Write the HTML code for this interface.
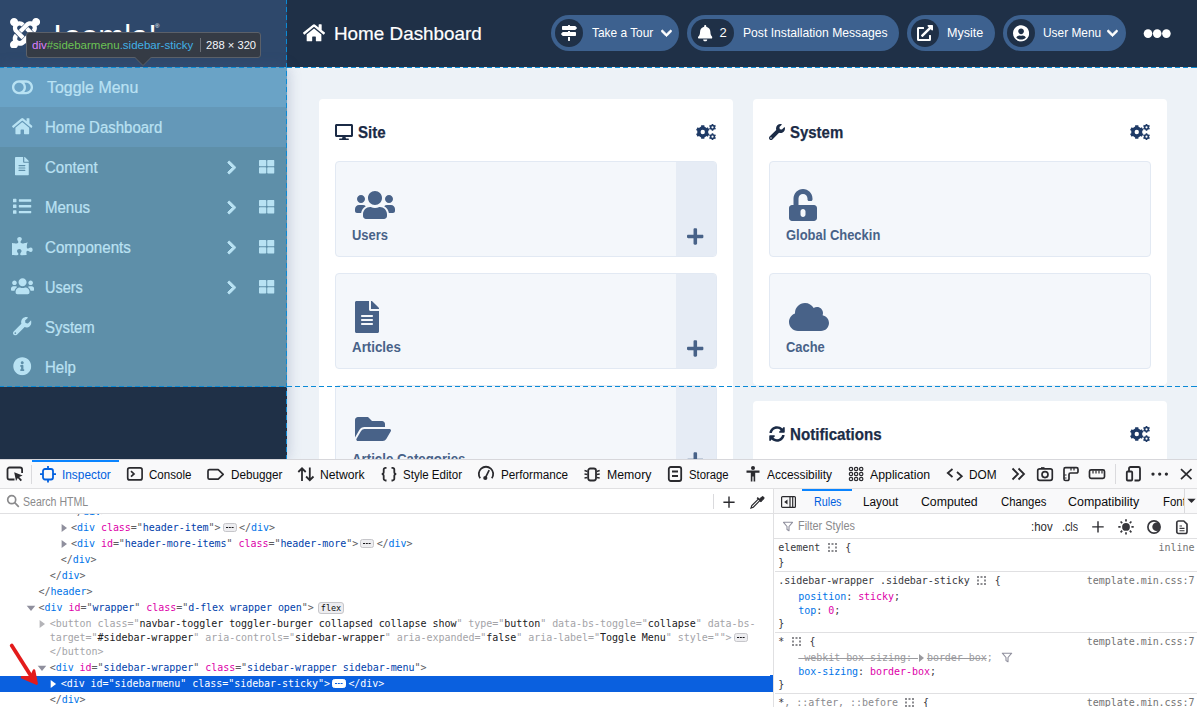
<!DOCTYPE html>
<html lang="en"><head><meta charset="utf-8"><title>Home Dashboard</title>
<style>
*{box-sizing:border-box;margin:0;padding:0}
html,body{width:1197px;height:707px;overflow:hidden;background:#fff}
body{position:relative;font-family:"Liberation Sans",sans-serif;font-size:16px;color:#212529}
.abs,.ic,.t{position:absolute}
.ic{display:block;fill:#fff;overflow:visible}
.t{white-space:nowrap;line-height:1;transform-origin:0 50%}
/* ---------- page ---------- */
#page{position:absolute;left:0;top:0;width:1197px;height:459px;overflow:hidden;background:#edf2f7}
#brand{position:absolute;left:0;top:0;width:287px;height:67px;background:#2e486b}
#hdr{position:absolute;left:287px;top:0;width:910px;height:67px;background:#1f3047}
#side{position:absolute;left:0;top:67px;width:287px;height:392px;background:#1f3047;box-shadow:0 0 13px rgba(70,90,140,.32)}
.row{position:absolute;left:0;width:287px;height:40px}
.row .t{color:#fff;font-size:15.600px;left:45px;top:13px;-webkit-text-stroke:.2px #fff}
.pill{position:absolute;top:15px;height:36px;border-radius:18px;background:#3d618f}
.pill .dot{position:absolute;top:4px;left:4px;width:28px;height:28px;border-radius:14px;background:#1f3047}
.pill .t{color:#fff;font-size:13px;top:11.3px}
.card{position:absolute;background:#fff;border-radius:4px}
.card h2{-webkit-text-stroke:.25px #1b2b46;position:absolute;transform-origin:0 50%;font-size:17px;font-weight:bold;color:#1b2b46;white-space:nowrap;line-height:1}
.qi{position:absolute;background:#f4f7fb;border:1px solid #e2e9f3;border-radius:4px;overflow:hidden}
.qi .add{position:absolute;right:0;top:0;bottom:0;width:40px;background:#e6ecf5}
.qi .t{font-size:14px;font-weight:bold;color:#486288}
/* highlighter */
#hl{position:absolute;left:0;top:67px;width:287px;height:320px;background:rgba(137,207,235,.6)}
.gh{position:absolute;left:0;width:1197px;height:1px;background:repeating-linear-gradient(90deg,#0a8ad6 0 5px,transparent 5px 8px) -1px 0}
.gv{position:absolute;top:0;width:1px;height:459px;background:repeating-linear-gradient(180deg,#0a8ad6 0 5px,transparent 5px 8px) 0 -1px}
#tip{position:absolute;left:26px;top:32px;width:235px;height:26px;background:#353b45;border:1px solid #5b6069;border-radius:3px;color:#f5f7fa;font-size:11px}
#tip .t{top:7px}
/* ---------- devtools ---------- */
#dt{position:absolute;left:0;top:0;width:1197px;height:707px;font-size:12px;color:#0c0c0d;overflow:hidden}
#dtbg{position:absolute;left:0;top:459px;width:1197px;height:248px;background:#fff}
#tb{position:absolute;left:0;top:459px;width:1197px;height:30px;background:#f9f9fa;border-top:1px solid #d7d7db;border-bottom:1px solid #e0e0e2}
.tl{font-size:12px;top:468.5px;color:#0c0c0d}
.sl{font-size:12px;top:495.500px;color:#0c0c0d}
.mono{font-family:"DejaVu Sans Mono","Liberation Mono",monospace;font-size:10px}
.ml{position:absolute;left:0;white-space:pre;line-height:14px;height:16px;padding-top:1px}
.ml, .rl{font-family:"DejaVu Sans Mono","Liberation Mono",monospace;font-size:10px;letter-spacing:-0.04px}
.tg{color:#0074e8}.an{color:#dd00a9}.av{color:#003eaa}.br{color:#5c5c5f}
.dim .tg,.dim .an,.dim .br{color:#a4a4a8}.dim .av{color:#202022}
.sel{background:#0a60df}
.sel *{color:#fff !important}
.badge{display:inline-block;border:1px solid #c6c6ca;border-radius:3px;font-size:8.500px;line-height:10.500px;margin-left:-2px;padding:0 2px;color:#0c0c0d;background:#ededf0;vertical-align:.5px;letter-spacing:0}
.el{display:inline-block;width:14px;height:9.500px;border:1px solid #c6c6ca;border-radius:2.500px;background:#ededf0;vertical-align:-1px;position:relative;margin:0 2.500px 0 2px}
.el::after{content:"";position:absolute;left:2.200px;top:3px;width:1.800px;height:1.800px;background:#1a1a1e;box-shadow:2.800px 0 #1a1a1e,5.600px 0 #1a1a1e}
.rl{position:absolute;white-space:pre;line-height:14px}
.pn{color:#0074e8}.pv{color:#dd00a9}.src{color:#737373}
.sepl{position:absolute;left:775px;width:422px;height:1px;background:#e0e0e2}

#mk{position:absolute;left:0;top:0;width:773px;height:707px;overflow:hidden}
#rv{position:absolute;left:0;top:0;width:1197px;height:707px;overflow:hidden;color:#38383d}
.sh{display:inline-block;width:9px;height:9px;vertical-align:-1px;margin:0 2.700px 0 1.500px;position:relative}
.sh::before{content:"";position:absolute;left:0;top:0;width:2px;height:2px;background:#8c8c90;box-shadow:3.500px 0 #8c8c90,7px 0 #8c8c90,0 3.500px #8c8c90,7px 3.500px #8c8c90,0 7px #8c8c90,3.500px 7px #8c8c90,7px 7px #8c8c90}
.ovr{color:#9a9a9e}
.ovr s{text-decoration-thickness:1px}
.tw{display:inline-block;width:0;height:0;border-left:5px solid #9a9a9e;border-top:4px solid transparent;border-bottom:4px solid transparent;margin:0 3px 0 1px;vertical-align:-1px}
.els{border-color:#fff !important;background:#fff !important}
.sel .els::after{background:#0a60df;box-shadow:2.800px 0 #0a60df,5.600px 0 #0a60df}

#ht{transform:scaleX(0.9925)}
#p1{transform:scaleX(0.9154)}
#p2{transform:scaleX(0.9344)}
#p3{transform:scaleX(0.9664)}
#p4{transform:scaleX(0.9154)}
#s0{transform:scaleX(0.9793)}
#s1{transform:scaleX(0.9606)}
#s2{transform:scaleX(0.9629)}
#s3{transform:scaleX(0.9634)}
#s4{transform:scaleX(0.9715)}
#s5{transform:scaleX(0.9280)}
#s6{transform:scaleX(0.9577)}
#s7{transform:scaleX(0.9602)}
#h1{transform:scaleX(0.8882)}
#h2{transform:scaleX(0.8796)}
#h3{transform:scaleX(0.8897)}
#q1{transform:scaleX(0.9249)}
#q2{transform:scaleX(0.9521)}
#q3{transform:scaleX(0.9472)}
#q4{transform:scaleX(0.9252)}
#q5{transform:scaleX(0.9231)}
#tp1{transform:scaleX(1.0462)}
#tp2{transform:scaleX(1.0173)}
#d1{transform:scaleX(0.9866)}
#d2{transform:scaleX(0.9652)}
#d3{transform:scaleX(0.9750)}
#d4{transform:scaleX(1.0155)}
#d5{transform:scaleX(0.9615)}
#d6{transform:scaleX(0.9767)}
#d7{transform:scaleX(1.0244)}
#d8{transform:scaleX(0.9422)}
#d9{transform:scaleX(0.9945)}
#d10{transform:scaleX(1.0252)}
#d11{transform:scaleX(0.9857)}
#d12{transform:scaleX(0.8807)}
#e1{transform:scaleX(0.8961)}
#e2{transform:scaleX(0.9797)}
#e3{transform:scaleX(1.0239)}
#e4{transform:scaleX(0.9449)}
#e5{transform:scaleX(1.0363)}
#e6{transform:scaleX(0.9495)}
#e7{transform:scaleX(0.9077)}
#e8{transform:scaleX(0.9521)}
#e9{transform:scaleX(0.8889)}
</style></head>
<body>
<svg width="0" height="0" style="position:absolute"><defs>
<symbol id="i-plus" viewBox="0 0 448 512"><path fill-rule="evenodd" d="M416 208H272V64c0-17.67-14.33-32-32-32h-32c-17.67 0-32 14.33-32 32v144H32c-17.67 0-32 14.33-32 32v32c0 17.67 14.33 32 32 32h144v144c0 17.67 14.33 32 32 32h32c17.67 0 32-14.33 32-32V304h144c17.67 0 32-14.33 32-32v-32c0-17.67-14.33-32-32-32z"/></symbol>
<symbol id="i-chev-r" viewBox="0 0 320 512"><path fill-rule="evenodd" stroke="#fff" stroke-width="34" stroke-linejoin="round" d="M285.476 272.971L91.132 467.314c-9.373 9.373-24.569 9.373-33.941 0l-22.667-22.667c-9.357-9.357-9.375-24.522-.04-33.901L188.505 256 34.484 101.255c-9.335-9.379-9.317-24.544.04-33.901l22.667-22.667c9.373-9.373 24.569-9.373 33.941 0L285.475 239.03c9.373 9.372 9.373 24.568.001 33.941z"/></symbol>
<symbol id="i-chev-d" viewBox="0 0 448 512"><path fill-rule="evenodd" stroke="#fff" stroke-width="34" stroke-linejoin="round" d="M207.029 381.476L12.686 187.132c-9.373-9.373-9.373-24.569 0-33.941l22.667-22.667c9.357-9.357 24.522-9.375 33.901-.04L224 284.505l154.745-154.021c9.379-9.335 24.544-9.317 33.901.04l22.667 22.667c9.373 9.373 9.373 24.569 0 33.941L240.971 381.476c-9.373 9.372-24.569 9.372-33.942 0z"/></symbol>
<symbol id="i-home" viewBox="0 0 576 512"><path fill-rule="evenodd" d="M280.37 148.26L96 300.11V464a16 16 0 0 0 16 16l112.06-.29a16 16 0 0 0 15.92-16V368a16 16 0 0 1 16-16h64a16 16 0 0 1 16 16v95.64a16 16 0 0 0 16 16.05L464 480a16 16 0 0 0 16-16V300L295.67 148.26a12.19 12.19 0 0 0-15.3 0zM571.6 251.47L488 182.56V44.05a12 12 0 0 0-12-12h-56a12 12 0 0 0-12 12v72.61L318.47 43a48 48 0 0 0-61 0L4.34 251.47a12 12 0 0 0-1.6 16.9l25.5 31A12 12 0 0 0 45.15 301l235.22-193.74a12.19 12.19 0 0 1 15.3 0L530.9 301a12 12 0 0 0 16.9-1.6l25.5-31a12 12 0 0 0-1.7-16.93z"/></symbol>
<symbol id="i-file" viewBox="0 0 384 512"><path fill-rule="evenodd" d="M224 136V0H24C10.7 0 0 10.7 0 24v464c0 13.3 10.7 24 24 24h336c13.3 0 24-10.7 24-24V160H248c-13.2 0-24-10.8-24-24zm64 236c0 6.6-5.4 12-12 12H108c-6.6 0-12-5.4-12-12v-8c0-6.6 5.4-12 12-12h168c6.6 0 12 5.4 12 12v8zm0-64c0 6.6-5.4 12-12 12H108c-6.6 0-12-5.4-12-12v-8c0-6.6 5.4-12 12-12h168c6.6 0 12 5.4 12 12v8zm0-72v8c0 6.6-5.4 12-12 12H108c-6.6 0-12-5.4-12-12v-8c0-6.6 5.4-12 12-12h168c6.6 0 12 5.4 12 12zm96-114.1v6.1H256V0h6.1c6.4 0 12.5 2.5 17 7l97.9 98c4.5 4.5 7 10.6 7 16.9z"/></symbol>
<symbol id="i-cloud" viewBox="0 0 640 512"><path fill-rule="evenodd" d="M537.6 226.6c4.1-10.7 6.4-22.4 6.4-34.6 0-53-43-96-96-96-19.7 0-38.1 6-53.3 16.2C367 64.2 315.3 32 256 32c-88.4 0-160 71.6-160 160 0 2.7.1 5.4.2 8.1C40.2 219.8 0 273.2 0 336c0 79.5 64.5 144 144 144h368c70.7 0 128-57.3 128-128 0-61.9-44-113.6-102.4-125.4z"/></symbol>
<symbol id="i-desktop" viewBox="0 0 576 512"><path fill-rule="evenodd" d="M528 0H48C21.5 0 0 21.5 0 48v320c0 26.5 21.5 48 48 48h192l-16 48h-72c-13.3 0-24 10.7-24 24s10.7 24 24 24h272c13.3 0 24-10.7 24-24s-10.7-24-24-24h-72l-16-48h192c26.5 0 48-21.5 48-48V48c0-26.5-21.5-48-48-48zm-16 352H64V64h448v288z"/></symbol>
<symbol id="i-wrench" viewBox="0 0 512 512"><path fill-rule="evenodd" d="M507.73 109.1c-2.24-9.03-13.54-12.09-20.12-5.51l-74.36 74.36-67.88-11.31-11.31-67.88 74.36-74.36c6.62-6.62 3.43-17.9-5.66-20.16-47.38-11.74-99.55.91-136.58 37.93-39.64 39.64-50.55 97.1-34.05 147.2L18.74 402.76c-24.99 24.99-24.99 65.51 0 90.5 24.99 24.99 65.51 24.99 90.5 0l213.21-213.21c50.12 16.71 107.47 5.68 147.37-34.22 37.07-37.07 49.7-89.32 37.91-136.73zM64 472c-13.25 0-24-10.75-24-24 0-13.26 10.75-24 24-24s24 10.74 24 24c0 13.25-10.75 24-24 24z"/></symbol>
<symbol id="i-users" viewBox="0 0 640 512"><path fill-rule="evenodd" d="M96 224c35.3 0 64-28.7 64-64s-28.7-64-64-64-64 28.7-64 64 28.7 64 64 64zm448 0c35.3 0 64-28.7 64-64s-28.7-64-64-64-64 28.7-64 64 28.7 64 64 64zm32 32h-64c-17.6 0-33.5 7.1-45.1 18.6 40.3 22.1 68.9 62 75.1 109.4h66c17.7 0 32-14.3 32-32v-32c0-35.3-28.7-64-64-64zm-256 0c61.9 0 112-50.1 112-112S381.9 32 320 32 208 82.1 208 144s50.1 112 112 112zm76.8 32h-8.3c-20.8 10-43.9 16-68.5 16s-47.6-6-68.5-16h-8.300C179.6 288 128 339.600 128 403.200V432c0 26.500 21.500 48 48 48h288c26.500 0 48-21.500 48-48v-28.800c0-63.600-51.600-115.200-115.200-115.200zm-223.700-13.400C161.500 263.100 145.600 256 128 256H64c-35.300 0-64 28.700-64 64v32c0 17.700 14.300 32 32 32h65.900c6.300-47.400 34.900-87.300 75.200-109.400z"/></symbol>
<symbol id="i-list" viewBox="0 0 512 512"><path fill-rule="evenodd" d="M80 368H16a16 16 0 0 0-16 16v64a16 16 0 0 0 16 16h64a16 16 0 0 0 16-16v-64a16 16 0 0 0-16-16zm0-320H16A16 16 0 0 0 0 64v64a16 16 0 0 0 16 16h64a16 16 0 0 0 16-16V64a16 16 0 0 0-16-16zm0 160H16a16 16 0 0 0-16 16v64a16 16 0 0 0 16 16h64a16 16 0 0 0 16-16v-64a16 16 0 0 0-16-16zm416 176H176a16 16 0 0 0-16 16v32a16 16 0 0 0 16 16h320a16 16 0 0 0 16-16v-32a16 16 0 0 0-16-16zm0-320H176a16 16 0 0 0-16 16v32a16 16 0 0 0 16 16h320a16 16 0 0 0 16-16V80a16 16 0 0 0-16-16zm0 160H176a16 16 0 0 0-16 16v32a16 16 0 0 0 16 16h320a16 16 0 0 0 16-16v-32a16 16 0 0 0-16-16z"/></symbol>
<symbol id="i-th" viewBox="0 0 512 512"><path fill-rule="evenodd" d="M296 32h192c13.255 0 24 10.745 24 24v160c0 13.255-10.745 24-24 24H296c-13.255 0-24-10.745-24-24V56c0-13.255 10.745-24 24-24zm-80 0H24C10.745 32 0 42.745 0 56v160c0 13.255 10.745 24 24 24h192c13.255 0 24-10.745 24-24V56c0-13.255-10.745-24-24-24zM0 296v160c0 13.255 10.745 24 24 24h192c13.255 0 24-10.745 24-24V296c0-13.255-10.745-24-24-24H24c-13.255 0-24 10.745-24 24zm296 184h192c13.255 0 24-10.745 24-24V296c0-13.255-10.745-24-24-24H296c-13.255 0-24 10.745-24 24v160c0 13.255 10.745 24 24 24z"/></symbol>
<symbol id="i-info" viewBox="0 0 512 512"><path fill-rule="evenodd" d="M256 8C119.043 8 8 119.083 8 256c0 136.997 111.043 248 248 248s248-111.003 248-248C504 119.083 392.957 8 256 8zm0 110c23.196 0 42 18.804 42 42s-18.804 42-42 42-42-18.804-42-42 18.804-42 42-42zm56 254c0 6.627-5.373 12-12 12h-88c-6.627 0-12-5.373-12-12v-24c0-6.627 5.373-12 12-12h12v-64h-12c-6.627 0-12-5.373-12-12v-24c0-6.627 5.373-12 12-12h64c6.627 0 12 5.373 12 12v100h12c6.627 0 12 5.373 12 12v24z"/></symbol>
<symbol id="i-puzzle" viewBox="0 0 576 512"><path fill-rule="evenodd" d="M519.442 288.651c-41.519 0-59.5 31.593-82.058 31.593C377.409 320.244 432 144 432 144s-196.288 80-196.288-3.297c0-35.827 36.288-46.25 36.288-85.985C272 19.216 243.885 0 210.539 0c-34.654 0-66.366 18.891-66.366 56.346 0 41.364 31.711 59.277 31.711 81.75C175.885 207.719 0 166.758 0 166.758v333.237s178.635 41.047 178.635-28.662c0-22.473-40-40.107-40-81.471 0-37.456 29.25-56.346 63.577-56.346 33.673 0 61.788 19.216 61.788 54.717 0 39.735-36.288 50.158-36.288 85.985 0 60.803 129.675 25.73 181.23 25.73 0 0-34.725-120.101 25.827-120.101 35.962 0 46.423 36.152 86.308 36.152C556.712 416 576 387.99 576 354.443c0-34.199-18.962-65.792-56.558-65.792z"/></symbol>
<symbol id="i-unlock" viewBox="0 0 448 512"><path fill-rule="evenodd" d="M400 256H152V152.9c0-39.6 31.7-72.5 71.3-72.9 40-.4 72.7 32.1 72.7 72v16c0 13.3 10.7 24 24 24h32c13.3 0 24-10.7 24-24v-16C376 68 307.5-.3 223.5 0 139.5.3 72 69.5 72 153.5V256H48c-26.5 0-48 21.5-48 48v160c0 26.5 21.5 48 48 48h352c26.5 0 48-21.5 48-48V304c0-26.5-21.5-48-48-48zM264 408c0 22.1-17.9 40-40 40s-40-17.9-40-40v-48c0-22.1 17.900-40 40-40s40 17.900 40 40v48z"/></symbol>
<symbol id="i-folder" viewBox="0 0 576 512"><path fill-rule="evenodd" d="M572.694 292.093L500.27 416.248A63.997 63.997 0 0 1 444.989 448H45.025c-18.523 0-30.064-20.093-20.731-36.093l72.424-124.155A64 64 0 0 1 152 256h399.964c18.523 0 30.064 20.093 20.73 36.093zM152 224h328v-48c0-26.51-21.49-48-48-48H272l-64-64H48C21.49 64 0 85.49 0 112v278.046l69.077-118.418C86.214 242.25 117.989 224 152 224z"/></symbol>
<symbol id="i-sync" viewBox="0 0 512 512"><path fill-rule="evenodd" d="M370.72 133.28C339.458 104.008 298.888 87.962 255.848 88c-77.458.068-144.328 53.178-162.791 126.85-1.344 5.363-6.122 9.15-11.651 9.15H24.103c-7.498 0-13.194-6.807-11.807-14.176C33.933 94.924 134.813 8 256 8c66.448 0 126.791 26.136 171.315 68.685L463.03 40.97C478.149 25.851 504 36.559 504 57.941V192c0 13.255-10.745 24-24 24H345.941c-21.382 0-32.09-25.851-16.971-40.971l41.75-41.749zM32 296h134.059c21.382 0 32.09 25.851 16.971 40.971l-41.75 41.75c31.262 29.273 71.835 45.319 114.876 45.28 77.418-.07 144.315-53.144 162.787-126.849 1.344-5.363 6.122-9.15 11.651-9.15h57.304c7.498 0 13.194 6.807 11.807 14.176C478.067 417.076 377.187 504 256 504c-66.448 0-126.791-26.136-171.315-68.685L48.97 471.03C33.851 486.149 8 475.441 8 454.059V320c0-13.255 10.745-24 24-24z"/></symbol>
<symbol id="i-bell" viewBox="0 0 448 512"><path fill-rule="evenodd" d="M224 512c35.32 0 63.97-28.65 63.97-64H160.03c0 35.35 28.65 64 63.97 64zm215.39-149.71c-19.32-20.76-55.47-51.99-55.47-154.29 0-77.7-54.48-139.9-127.94-155.16V32c0-17.67-14.32-32-31.98-32s-31.98 14.33-31.98 32v20.84C118.56 68.1 64.08 130.3 64.08 208c0 102.3-36.15 133.53-55.47 154.29-6 6.45-8.66 14.16-8.61 21.71.11 16.4 12.98 32 32.1 32h383.8c19.12 0 32-15.6 32.1-32 .05-7.55-2.61-15.27-8.61-21.71z"/></symbol>
<symbol id="i-signs" viewBox="0 0 512 512"><path fill-rule="evenodd" d="M507.31 84.69L464 41.37c-6-6-14.14-9.37-22.63-9.37H288V16c0-8.84-7.16-16-16-16h-32c-8.84 0-16 7.16-16 16v16H56c-13.25 0-24 10.75-24 24v80c0 13.25 10.75 24 24 24h385.37c8.49 0 16.62-3.37 22.63-9.37l43.31-43.31c6.25-6.26 6.25-16.38 0-22.63zM224 496c0 8.84 7.16 16 16 16h32c8.84 0 16-7.16 16-16V384h-64v112zm232-272H288v-32h-64v32H70.63c-8.49 0-16.62 3.37-22.63 9.37L4.69 276.69c-6.25 6.25-6.25 16.38 0 22.63L48 342.63c6 6 14.14 9.37 22.63 9.37H456c13.25 0 24-10.75 24-24v-80c0-13.25-10.750-24-24-24z"/></symbol>
<symbol id="i-extlink" viewBox="0 0 512 512"><path fill-rule="evenodd" d="M432 320H400a16 16 0 0 0-16 16V448H64V128H208a16 16 0 0 0 16-16V80a16 16 0 0 0-16-16H48A48 48 0 0 0 0 112V464a48 48 0 0 0 48 48H400a48 48 0 0 0 48-48V336A16 16 0 0 0 432 320ZM488 0h-128c-21.37 0-32.05 25.91-17 41l35.73 35.73L135 320.37a24 24 0 0 0 0 34L157.67 377a24 24 0 0 0 34 0L435.28 133.32 471 169c15 15 41 4.5 41-17V24A24 24 0 0 0 488 0Z"/></symbol>
<symbol id="i-usercircle" viewBox="0 0 496 512"><path fill-rule="evenodd" d="M248 8C111 8 0 119 0 256s111 248 248 248 248-111 248-248S385 8 248 8zm0 96c48.6 0 88 39.4 88 88s-39.4 88-88 88-88-39.4-88-88 39.4-88 88-88zm0 344c-58.7 0-111.3-26.6-146.5-68.2 18.8-35.4 55.6-59.8 98.5-59.8 2.4 0 4.8.4 7.1 1.1 13 4.2 26.6 6.9 40.9 6.9 14.3 0 28-2.7 40.9-6.9 2.3-.7 4.7-1.1 7.1-1.1 42.9 0 79.7 24.4 98.5 59.8C359.3 421.4 306.7 448 248 448z"/></symbol>
<symbol id="i-toggle" viewBox="0 0 576 512"><path fill-rule="evenodd" d="M384 64H192C85.961 64 0 149.961 0 256s85.961 192 192 192h192c106.039 0 192-85.961 192-192S490.039 64 384 64zM64 256c0-70.741 57.249-128 128-128 70.741 0 128 57.249 128 128 0 70.741-57.249 128-128 128-70.741 0-128-57.249-128-128zm320 128h-48.905c65.217-72.858 65.236-183.12 0-256H384c70.741 0 128 57.249 128 128 0 70.741-57.249 128-128 128z"/></symbol>
<symbol id="i-cogs" viewBox="0 0 640 512"><path fill-rule="evenodd" d="M268.0 428.3 L268.1 473.9 L163.9 473.9 L164.0 428.3 L92.8 387.2 L53.4 410.0 L1.3 319.8 L40.8 297.1 L40.8 214.9 L1.3 192.2 L53.4 102.0 L92.8 124.8 L164.0 83.7 L163.9 38.1 L268.1 38.1 L268.0 83.7 L339.2 124.8 L378.6 102.0 L430.7 192.2 L391.2 214.9 L391.2 297.1 L430.7 319.8 L378.6 410.0 L339.2 387.2Z M146.0 256.0 a70.0 70.0 0 1 0 140.0 0 a70.0 70.0 0 1 0 -140.0 0Z M553.4 190.2 L554.5 216.9 L501.5 216.9 L502.6 190.2 L467.8 170.1 L445.2 184.4 L418.7 138.5 L442.3 126.1 L442.3 85.9 L418.7 73.5 L445.2 27.6 L467.8 41.9 L502.6 21.8 L501.5 -4.9 L554.5 -4.9 L553.4 21.8 L588.2 41.9 L610.8 27.6 L637.3 73.5 L613.7 85.9 L613.7 126.1 L637.3 138.5 L610.8 184.4 L588.2 170.1Z M494.0 106.0 a34.0 34.0 0 1 0 68.0 0 a34.0 34.0 0 1 0 -68.0 0Z M553.4 490.2 L554.5 516.9 L501.5 516.9 L502.6 490.2 L467.8 470.1 L445.2 484.4 L418.7 438.5 L442.3 426.1 L442.3 385.9 L418.7 373.5 L445.2 327.6 L467.8 341.9 L502.6 321.8 L501.5 295.1 L554.5 295.1 L553.4 321.8 L588.2 341.9 L610.8 327.6 L637.3 373.5 L613.7 385.9 L613.7 426.1 L637.3 438.5 L610.8 484.4 L588.2 470.1Z M494.0 406.0 a34.0 34.0 0 1 0 68.0 0 a34.0 34.0 0 1 0 -68.0 0Z"/></symbol>
</defs></svg>
<div id="page">
  <div id="hdr">
    <!-- coordinates inside #hdr are offset by 287 -->
  </div>
  <div id="brand">
    <svg class="abs" style="left:9.700px;top:17.600px;width:30.200px;height:30.700px" viewBox="0 32 448 456" preserveAspectRatio="none"><path fill="#fff" d="M.6 92.1C.6 58.8 27.4 32 60.4 32c30 0 54.500 21.900 59.200 50.200 32.600-7.600 67.100.6 96.500 30l-44.300 44.300c-20.500-20.500-42.600-16.300-55.400-3.500-14.300 14.300-14.300 37.900 0 52.200l99.500 99.500-44 44.300c-87.700-87.200-49.700-49.700-99.800-99.700-26.800-26.500-35-64.800-24.800-98.900C20.400 144.600.6 120.700.6 92.100zm129.500 116.400l44.300 44.300c10-10 89.700-89.700 99.700-99.800 14.300-14.300 37.600-14.300 51.900 0 12.800 12.800 17 35-3.500 55.400l44 44.300c31.200-31.200 38.500-67.600 28.900-101.200 29.200-4.100 51.900-29.200 51.900-59.500 0-33.200-26.800-60.100-59.800-60.100-30.300 0-55.400 22.500-59.500 51.600-33.800-9.900-71.700-1.500-98.300 25.100-18.300 19.100-71.100 71.500-99.600 99.900zm266.300 152.200c8.200-32.700-.9-68.500-26.300-93.900-11.800-12.200 5 4.700-99.500-99.700l-44.300 44.300 99.700 99.700c14.300 14.300 14.300 37.600 0 51.900-12.800 12.800-35 17-55.400-3.500l-44 44.300c27.600 30.200 68 38.800 102.700 28 5.500 27.400 29.700 48.100 58.900 48.100 33 0 59.800-26.800 59.800-60.100 0-30.200-22.500-55.100-51.600-59.100zm-84.300-53.100l-44-44.300c-87 86.400-50.400 50.400-99.700 99.800-14.300 14.300-37.600 14.300-51.900 0-13.100-13.400-11.800-36.200 0-51.900l-44-44.300c-28.200 25.100-38.800 67.400-28 102.300C21.900 374.700 0 398.900 0 428.400c0 33 26.800 59.800 59.800 59.800 28.600 0 52.500-19.800 58.600-46.700 34.100 10.200 72.400 2 99.200-24.800 17.800-17.700 70.500-70.500 94.500-94.100z"/></svg>
    <span class="t" id="jt" style="left:53px;top:20.600px;font-size:31px;color:#fff"><span style="font-family:'DejaVu Sans',sans-serif;margin-right:1.700px">J</span>oomla!</span>
    <span class="t" style="left:155px;top:23px;font-size:6px;color:#fff">®</span>
  </div>
  <!-- header title -->
  <svg class="ic" style="left:302.78px;top:22.70px;width:22.05px;height:19.60px;"><use href="#i-home"/></svg>
  <span class="t" id="ht" style="left:334px;top:24.100px;font-size:19px;color:#fff;-webkit-text-stroke:.2px #fff">Home Dashboard</span>
  <!-- pills -->
  <div class="pill" style="left:551px;width:128px"><div class="dot"></div><span class="t" id="p1" style="left:41px">Take a Tour</span></div>
  <svg class="ic" style="left:561.40px;top:25.00px;width:16.00px;height:16.00px;"><use href="#i-signs"/></svg>
  <svg class="ic" style="left:661.33px;top:26.75px;width:10.94px;height:12.50px;"><use href="#i-chev-d"/></svg>
  <div class="pill" style="left:687px;width:212px"><div class="dot" style="width:43px"></div><span class="t" id="p2n" style="left:32.5px">2</span><span class="t" id="p2" style="left:55.5px">Post Installation Messages</span></div>
  <svg class="ic" style="left:698.28px;top:24.55px;width:14.44px;height:16.50px;"><use href="#i-bell"/></svg>
  <div class="pill" style="left:907px;width:88px"><div class="dot"></div><span class="t" id="p3" style="left:40px">Mysite</span></div>
  <svg class="ic" style="left:917.20px;top:25.00px;width:16.00px;height:16.00px;"><use href="#i-extlink"/></svg>
  <div class="pill" style="left:1003px;width:123px"><div class="dot"></div><span class="t" id="p4" style="left:39.5px">User Menu</span></div>
  <svg class="ic" style="left:1012.91px;top:24.95px;width:16.18px;height:16.70px;"><use href="#i-usercircle"/></svg>
  <svg class="ic" style="left:1107.33px;top:26.75px;width:10.94px;height:12.50px;"><use href="#i-chev-d"/></svg>
  <svg class="abs" style="left:1143px;top:28px;width:29px;height:11px"><g fill="#fff"><circle cx="5" cy="5.6" r="4.3"/><circle cx="14.2" cy="5.6" r="4.3"/><circle cx="23.4" cy="5.6" r="4.3"/></g></svg>

  <!-- sidebar -->
  <div id="side">
    <div class="row" style="top:0;background:#3d618f"><span class="t" id="s0" style="left:47px;font-size:16.300px;top:12px">Toggle Menu</span></div>
    <div class="row" style="top:40px;background:#2e486b"><span class="t" id="s1">Home Dashboard</span></div>
    <div class="row" style="top:80px"><span class="t" id="s2">Content</span></div>
    <div class="row" style="top:120px"><span class="t" id="s3">Menus</span></div>
    <div class="row" style="top:160px"><span class="t" id="s4">Components</span></div>
    <div class="row" style="top:200px"><span class="t" id="s5">Users</span></div>
    <div class="row" style="top:240px"><span class="t" id="s6">System</span></div>
    <div class="row" style="top:280px"><span class="t" id="s7">Help</span></div>
  </div>
  <svg class="ic" style="left:12.38px;top:77.55px;width:21.04px;height:18.70px;"><use href="#i-toggle"/></svg>
  <svg class="ic" style="left:12.01px;top:116.75px;width:20.59px;height:18.30px;"><use href="#i-home"/></svg>
  <svg class="ic" style="left:15.36px;top:157.25px;width:13.88px;height:18.50px;"><use href="#i-file"/></svg>
  <svg class="ic" style="left:13.05px;top:197.15px;width:18.50px;height:18.50px;"><use href="#i-list"/></svg>
  <svg class="ic" style="left:11.89px;top:237.15px;width:20.81px;height:18.50px;"><use href="#i-puzzle"/></svg>
  <svg class="ic" style="left:10.74px;top:277.15px;width:23.12px;height:18.50px;"><use href="#i-users"/></svg>
  <svg class="ic" style="left:13.05px;top:317.15px;width:18.50px;height:18.50px;"><use href="#i-wrench"/></svg>
  <svg class="ic" style="left:13.05px;top:357.15px;width:18.50px;height:18.50px;"><use href="#i-info"/></svg>
  <svg class="ic" style="left:226.51px;top:159.70px;width:9.38px;height:15.00px;"><use href="#i-chev-r"/></svg><svg class="ic" style="left:259.25px;top:159.45px;width:15.50px;height:15.50px;"><use href="#i-th"/></svg>
  <svg class="ic" style="left:226.51px;top:199.70px;width:9.38px;height:15.00px;"><use href="#i-chev-r"/></svg><svg class="ic" style="left:259.25px;top:199.45px;width:15.50px;height:15.50px;"><use href="#i-th"/></svg>
  <svg class="ic" style="left:226.51px;top:239.70px;width:9.38px;height:15.00px;"><use href="#i-chev-r"/></svg><svg class="ic" style="left:259.25px;top:239.45px;width:15.50px;height:15.50px;"><use href="#i-th"/></svg>
  <svg class="ic" style="left:226.51px;top:279.70px;width:9.38px;height:15.00px;"><use href="#i-chev-r"/></svg><svg class="ic" style="left:259.25px;top:279.45px;width:15.50px;height:15.50px;"><use href="#i-th"/></svg>

  <!-- cards -->
  <div class="card" style="left:319px;top:99px;width:414px;height:400px">
    <h2 id="h1" style="left:38.5px;top:25.2px">Site</h2>
    <div class="qi" style="left:16px;top:62px;width:382px;height:96px"><div class="add"></div><span class="t" id="q1" style="left:16.2px;top:66px">Users</span></div>
    <div class="qi" style="left:16px;top:174px;width:382px;height:96px"><div class="add"></div><span class="t" id="q2" style="left:16.2px;top:66px">Articles</span></div>
    <div class="qi" style="left:16px;top:286px;width:382px;height:96px"><div class="add"></div><span class="t" id="q3" style="left:16.2px;top:66px">Article Categories</span></div>
  </div>
  <svg class="ic" style="left:335.00px;top:124.00px;width:18.00px;height:16.00px;fill:#1b2b46;"><use href="#i-desktop"/></svg>
  <svg class="ic" style="left:696.00px;top:124.00px;width:20.00px;height:16.00px;fill:#1e3a66;"><use href="#i-cogs"/></svg>
  <svg class="ic" style="left:355.00px;top:189.00px;width:40.00px;height:32.00px;fill:#486288;"><use href="#i-users"/></svg>
  <svg class="ic" style="left:355.00px;top:301.00px;width:24.00px;height:32.00px;fill:#486288;"><use href="#i-file"/></svg>
  <svg class="ic" style="left:355.00px;top:413.00px;width:36.00px;height:32.00px;fill:#486288;"><use href="#i-folder"/></svg>
  <svg class="ic" style="left:687.39px;top:227.20px;width:16.62px;height:19.00px;fill:#486288;"><use href="#i-plus"/></svg>
  <svg class="ic" style="left:687.39px;top:339.20px;width:16.62px;height:19.00px;fill:#486288;"><use href="#i-plus"/></svg>
  <svg class="ic" style="left:687.39px;top:451.20px;width:16.62px;height:19.00px;fill:#486288;"><use href="#i-plus"/></svg>
  <div class="card" style="left:753px;top:99px;width:414px;height:286px">
    <h2 id="h2" style="left:36.6px;top:25.2px">System</h2>
    <div class="qi" style="left:16px;top:62px;width:382px;height:96px"><span class="t" id="q4" style="left:16.2px;top:66px">Global Checkin</span></div>
    <div class="qi" style="left:16px;top:174px;width:382px;height:96px"><span class="t" id="q5" style="left:16.2px;top:66px">Cache</span></div>
  </div>
  <svg class="ic" style="left:769.00px;top:124.00px;width:16.00px;height:16.00px;fill:#1b2b46;"><use href="#i-wrench"/></svg>
  <svg class="ic" style="left:1130.00px;top:124.00px;width:20.00px;height:16.00px;fill:#1e3a66;"><use href="#i-cogs"/></svg>
  <svg class="ic" style="left:789.00px;top:189.00px;width:28.00px;height:32.00px;fill:#486288;"><use href="#i-unlock"/></svg>
  <svg class="ic" style="left:789.00px;top:301.00px;width:40.00px;height:32.00px;fill:#486288;"><use href="#i-cloud"/></svg>
  <div class="card" style="left:753px;top:401px;width:414px;height:100px">
    <h2 id="h3" style="left:36.5px;top:25.2px">Notifications</h2>
  </div>
  <svg class="ic" style="left:769.00px;top:426.00px;width:16.00px;height:16.00px;fill:#1b2b46;"><use href="#i-sync"/></svg>
  <svg class="ic" style="left:1130.00px;top:426.00px;width:20.00px;height:16.00px;fill:#1e3a66;"><use href="#i-cogs"/></svg>

  <!-- devtools highlighter -->
  <div id="hl"></div>
  <div class="gh" style="top:67px"></div>
  <div class="gh" style="top:386px"></div>
  <div class="gv" style="left:286px"></div>
  <div id="tip">
    <span class="t" id="tp1" style="left:5px"><span style="color:#df80ff">div</span><span style="color:#6bc354">#sidebarmenu</span><span style="color:#41b0e6">.sidebar-sticky</span></span>
    <span class="abs" style="left:172.5px;top:5px;width:1px;height:14px;background:#6b7078"></span>
    <span class="t" id="tp2" style="left:179px">288 × 320</span>
  </div>
  <svg class="abs" style="left:133px;top:57px;width:20px;height:10px"><path d="M1.5 0 L10 8.5 L18.5 0" fill="#353b45" stroke="#5b6069" stroke-width="1"/></svg>
</div>

<div id="dt">
  <div id="dtbg"></div>
  <!-- markup view -->
  <div id="mk">
    <div class="ml" style="left:71px;top:504px"><span class="br">&lt;/</span><span class="tg">div</span><span class="br">&gt;</span></div>
    <div class="ml" style="left:71px;top:520px"><span class="br">&lt;</span><span class="tg">div</span> <span class="an">class</span><span class="br">="</span><span class="av">header-item</span><span class="br">"&gt;</span><span class="el"></span><span class="br">&lt;/</span><span class="tg">div</span><span class="br">&gt;</span></div>
    <div class="ml" style="left:71px;top:536px"><span class="br">&lt;</span><span class="tg">div</span> <span class="an">id</span><span class="br">="</span><span class="av">header-more-items</span><span class="br">"</span> <span class="an">class</span><span class="br">="</span><span class="av">header-more</span><span class="br">"&gt;</span><span class="el"></span><span class="br">&lt;/</span><span class="tg">div</span><span class="br">&gt;</span></div>
    <div class="ml" style="left:60.700px;top:552px"><span class="br">&lt;/</span><span class="tg">div</span><span class="br">&gt;</span></div>
    <div class="ml" style="left:49.700px;top:568px"><span class="br">&lt;/</span><span class="tg">div</span><span class="br">&gt;</span></div>
    <div class="ml" style="left:38.600px;top:584px"><span class="br">&lt;/</span><span class="tg">header</span><span class="br">&gt;</span></div>
    <div class="ml" style="left:38.600px;top:600px"><span class="br">&lt;</span><span class="tg">div</span> <span class="an">id</span><span class="br">="</span><span class="av">wrapper</span><span class="br">"</span> <span class="an">class</span><span class="br">="</span><span class="av">d-flex wrapper open</span><span class="br">"&gt;</span> <span class="badge">flex</span></div>
    <div class="ml dim" style="left:49.700px;top:616px;height:44px"><span class="br">&lt;</span><span class="tg">button</span> <span class="an">class</span><span class="br">="</span><span class="av">navbar-toggler toggler-burger collapsed collapse show</span><span class="br">"</span> <span class="an">type</span><span class="br">="</span><span class="av">button</span><span class="br">"</span> <span class="an">data-bs-toggle</span><span class="br">="</span><span class="av">collapse</span><span class="br">"</span> <span class="an">data-bs-</span>
<span class="an">target</span><span class="br">="</span><span class="av">#sidebar-wrapper</span><span class="br">"</span> <span class="an">aria-controls</span><span class="br">="</span><span class="av">sidebar-wrapper</span><span class="br">"</span> <span class="an">aria-expanded</span><span class="br">="</span><span class="av">false</span><span class="br">"</span> <span class="an">aria-label</span><span class="br">="</span><span class="av">Toggle Menu</span><span class="br">"</span> <span class="an">style</span><span class="br">=""&gt;</span><span class="el"></span>
<span class="br">&lt;/</span><span class="tg">button</span><span class="br">&gt;</span></div>
    <div class="ml" style="left:49.700px;top:660px"><span class="br">&lt;</span><span class="tg">div</span> <span class="an">id</span><span class="br">="</span><span class="av">sidebar-wrapper</span><span class="br">"</span> <span class="an">class</span><span class="br">="</span><span class="av">sidebar-wrapper sidebar-menu</span><span class="br">"&gt;</span></div>
    <div class="abs sel" style="left:0;top:676px;width:773px;height:16px"></div>
    <div class="ml sel" style="left:60.700px;top:676px;background:none"><span class="br">&lt;</span><span class="tg">div</span> <span class="an">id</span><span class="br">="</span><span class="av">sidebarmenu</span><span class="br">"</span> <span class="an">class</span><span class="br">="</span><span class="av">sidebar-sticky</span><span class="br">"&gt;</span><span class="el els"></span><span class="br">&lt;/</span><span class="tg">div</span><span class="br">&gt;</span></div>
    <div class="ml" style="left:49.700px;top:692px"><span class="br">&lt;/</span><span class="tg">div</span><span class="br">&gt;</span></div>
    <!-- twisties -->
    <svg class="abs" style="left:61px;top:523px" width="7" height="10"><path d="M.6 .9L6 5 .6 9.100Z" fill="#8f8f9d"/></svg>
    <svg class="abs" style="left:61px;top:539px" width="7" height="10"><path d="M.6 .9L6 5 .6 9.100Z" fill="#8f8f9d"/></svg>
    <svg class="abs" style="left:26px;top:605px" width="10" height="7"><path d="M.7 .8H9.300L5 6Z" fill="#8f8f9d"/></svg>
    <svg class="abs" style="left:39px;top:619px" width="7" height="10"><path d="M.6 .9L6 5 .6 9.100Z" fill="#b4b4b8"/></svg>
    <svg class="abs" style="left:37px;top:665px" width="10" height="7"><path d="M.7 .8H9.300L5 6Z" fill="#8f8f9d"/></svg>
    <svg class="abs" style="left:50px;top:679px" width="7" height="10"><path d="M.7 .9L6.100 5 .7 9.100Z" fill="#fff"/></svg>
    <!-- red annotation arrow -->
    <svg class="abs" style="left:0;top:640px" width="60" height="55" viewBox="0 0 60 55"><g stroke="#e31b1b" stroke-linecap="round" stroke-linejoin="round"><path d="M11.700 5.500L31 36" fill="none" stroke-width="3.800"/><path d="M22 37.200L36.600 43.600 34 30.500 31 37Z" fill="#e31b1b" stroke-width="2.600"/></g></svg>
  </div>
  <!-- rule view -->
  <div id="rv">
    <div class="rl" style="left:778.300px;top:541.200px">element <span class="sh"></span> {</div><div class="rl src" style="right:2.500px;top:541.200px">inline</div>
    <div class="rl" style="left:778.300px;top:556.200px">}</div>
    <div class="sepl" style="top:571px"></div>
    <div class="rl" style="left:778.300px;top:574px">.sidebar-wrapper .sidebar-sticky <span class="sh"></span> {</div><div class="rl src" style="right:2.500px;top:574px">template.min.css:7</div>
    <div class="rl" style="left:798.300px;top:590px"><span class="pn">position</span>: <span class="pv">sticky</span>;</div>
    <div class="rl" style="left:798.300px;top:604.200px"><span class="pn">top</span>: <span class="pv">0</span>;</div>
    <div class="rl" style="left:778.300px;top:616.500px">}</div>
    <div class="sepl" style="top:632px"></div>
    <div class="rl" style="left:778.300px;top:634.500px">* <span class="sh"></span> {</div><div class="rl src" style="right:2.500px;top:634.500px">template.min.css:7</div>
    <div class="rl ovr" style="left:798.300px;top:650.500px"><s>-webkit-box-sizing: <span class="tw"></span>border-box</s>;</div>
    <svg class="abs" style="left:1001px;top:652px" width="12" height="11" viewBox="0 0 12 11"><path d="M1.300 1.200H10.700L7 5.500V9.800L5 8.600V5.500Z" fill="none" stroke="#8f8f9d" stroke-width="1.100" stroke-linejoin="round"/></svg>
    <div class="rl" style="left:798.300px;top:664.700px"><span class="pn">box-sizing</span>: <span class="pv">border-box</span>;</div>
    <div class="rl" style="left:778.300px;top:678px">}</div>
    <div class="sepl" style="top:693px"></div>
    <div class="rl" style="left:778.300px;top:695.500px">*<span style="color:#8a8a8e">, ::after, ::before</span> <span class="sh"></span> {</div><div class="rl src" style="right:2.500px;top:695.500px">template.min.css:7</div>
    <div class="abs" style="left:770px;top:675px;width:3px;height:16px;background:#0a60df"></div>
  </div>

  <div class="abs" style="left:0;top:489px;width:773px;height:24px;background:#fff"></div>
  <div id="tb"></div>
  <div class="abs" style="left:32px;top:460px;width:87px;height:2px;background:#0a84ff"></div>
  <div class="abs" style="left:31px;top:465px;width:1px;height:19px;background:#dadadd"></div>
  <div class="abs" style="left:1115px;top:464px;width:1px;height:20px;background:#dadadd"></div>
  <!-- toolbar icons -->
  <svg class="abs ti" style="left:6px;top:466px" width="18" height="16" viewBox="0 0 18 16"><path d="M8.5 13.5H3.6A2.1 2.1 0 0 1 1.5 11.4V3.6A2.1 2.1 0 0 1 3.6 1.5H14A2.1 2.1 0 0 1 16.1 3.6V7" fill="none" stroke="#2a2a2e" stroke-width="1.80"/><path d="M8.2 6.2L16.6 9.6 13.2 10.9 16 14 14.6 15.2 11.8 12.1 10 15Z" fill="#2a2a2e"/></svg>
  <svg class="abs ti" style="left:39px;top:465px" width="18" height="18" viewBox="0 0 18 18"><g fill="none" stroke="#0060df" stroke-width="1.80"><rect x="4" y="4" width="10" height="10.5" rx="2"/><path d="M9 1v3M9 14.5v3M1 9.2h3M14 9.2h3"/></g></svg>
  <svg class="abs ti" style="left:126px;top:466px" width="18" height="16" viewBox="0 0 18 16"><g fill="none" stroke="#2a2a2e" stroke-width="1.68"><rect x="1.7" y="1.9" width="14.4" height="12" rx="2"/><path d="M5 5.2L8 7.9 5 10.6"/></g></svg>
  <svg class="abs ti" style="left:206px;top:467px" width="19" height="14" viewBox="0 0 19 14"><path d="M3.5 2.6H12.2L17.2 7.4 12.2 12.2H3.5A1.5 1.5 0 0 1 2 10.700V4.100A1.500 1.500 0 0 1 3.500 2.600Z" fill="none" stroke="#2a2a2e" stroke-width="1.68" stroke-linejoin="round"/></svg>
  <svg class="abs ti" style="left:297px;top:466px" width="18" height="16" viewBox="0 0 18 16"><g fill="none" stroke="#2a2a2e" stroke-width="1.80"><path d="M5 15V2.500M1.300 6L5 2.300 8.700 6"/><path d="M12.800 1.500V14M9.100 10.500L12.800 14.200 16.500 10.500"/></g></svg>
  <svg class="abs ti" style="left:380px;top:466px" width="18" height="16" viewBox="0 0 18 16"><g fill="none" stroke="#2a2a2e" stroke-width="1.80"><path d="M6.500 1.800H5.500A1.800 1.800 0 0 0 3.700 3.600V6A1.800 1.800 0 0 1 1.800 8 1.800 1.800 0 0 1 3.700 10V12.700A1.800 1.800 0 0 0 5.500 14.500H6.500"/><path d="M11.500 1.800H12.500A1.800 1.800 0 0 1 14.300 3.600V6A1.800 1.800 0 0 0 16.200 8 1.800 1.800 0 0 0 14.300 10V12.700A1.800 1.800 0 0 1 12.500 14.500H11.500"/></g></svg>
  <svg class="abs ti" style="left:477px;top:465px" width="18" height="17" viewBox="0 0 18 17"><path d="M3.200 13.200A7.200 7.200 0 1 1 14.800 13.200" fill="none" stroke="#2a2a2e" stroke-width="1.80"/><path d="M12.200 5.200L8.600 12.300" stroke="#2a2a2e" stroke-width="1.68"/><circle cx="8.300" cy="13" r="2.100" fill="#2a2a2e"/></svg>
  <svg class="abs ti" style="left:583px;top:466px" width="18" height="17" viewBox="0 0 18 17"><g fill="none" stroke="#2a2a2e"><rect x="5.200" y="2.500" width="7.800" height="12" rx="2.200" stroke-width="1.80"/><path d="M1.500 4.500l3 1M1.500 8l3 .5M1.500 12l3-.5M16.700 4.500l-3 1M16.700 8l-3 .5M16.700 12l-3-.5" stroke-width="1.32"/></g></svg>
  <svg class="abs ti" style="left:667px;top:465px" width="16" height="18" viewBox="0 0 16 18"><g fill="none" stroke="#2a2a2e" stroke-width="1.80"><rect x="1.800" y="2" width="12.400" height="14" rx="2"/><path d="M5 6.500h6M5 11h6"/></g></svg>
  <svg class="abs ti" style="left:745px;top:465px" width="16" height="18" viewBox="0 0 16 18"><g fill="#2a2a2e"><circle cx="8" cy="3" r="2"/><path d="M1.500 5.600H14.500V7.800H10.200V16.500H8.600V11.500H7.400V16.500H5.800V7.800H1.500Z"/></g></svg>
  <svg class="abs ti" style="left:848px;top:466px" width="16" height="16" viewBox="0 0 16 16"><g fill="none" stroke="#2a2a2e" stroke-width="1.20"><circle cx="3" cy="3" r="1.700"/><circle cx="8.100" cy="3" r="1.700"/><circle cx="13.200" cy="3" r="1.700"/><circle cx="3" cy="8" r="1.700"/><circle cx="8.100" cy="8" r="1.700"/><circle cx="13.200" cy="8" r="1.700"/><circle cx="3" cy="13" r="1.700"/><circle cx="8.100" cy="13" r="1.700"/><circle cx="13.200" cy="13" r="1.700"/></g></svg>
  <svg class="abs ti" style="left:946px;top:467px" width="18" height="15" viewBox="0 0 18 15"><g fill="none" stroke="#2a2a2e" stroke-width="1.80"><path d="M6.500 2L1.800 6 6.500 10"/><path d="M11 5l4.800 4.200L11 13.400"/></g></svg>
  <svg class="abs ti" style="left:1011px;top:467px" width="15" height="14" viewBox="0 0 15 14"><g fill="none" stroke="#2a2a2e" stroke-width="1.80"><path d="M1.500 1.500L7 7 1.500 12.500"/><path d="M7.500 1.500L13 7 7.500 12.500"/></g></svg>
  <svg class="abs ti" style="left:1036px;top:466px" width="18" height="16" viewBox="0 0 18 16"><g fill="none" stroke="#2a2a2e" stroke-width="1.68"><path d="M5 2h3.500"/><rect x="1.700" y="2.800" width="14.600" height="11.500" rx="2"/><circle cx="9" cy="8.600" r="3"/></g></svg>
  <svg class="abs ti" style="left:1062px;top:466px" width="18" height="16" viewBox="0 0 18 16"><g fill="none" stroke="#2a2a2e" stroke-width="1.68"><path d="M3.500 1.700H14.500A1.500 1.500 0 0 1 16 3.200V5.500A1.500 1.500 0 0 1 14.500 7H8.500A1.500 1.500 0 0 0 7 8.500V13A1.500 1.500 0 0 1 5.500 14.500H3.500A1.500 1.500 0 0 1 2 13V3.200A1.500 1.500 0 0 1 3.500 1.700Z"/><path d="M9 2v2.500M12 2v2.500M2.500 9h2M2.500 12h2" stroke-width="1.20"/></g></svg>
  <svg class="abs ti" style="left:1088px;top:468px" width="18" height="12" viewBox="0 0 18 12"><g fill="none" stroke="#2a2a2e" stroke-width="1.68"><rect x="1.500" y="1.900" width="15" height="8.400" rx="1.600"/><path d="M5 2.500v3M8 2.500v3M11 2.500v3M14 2.500v3" stroke-width="1.20"/></g></svg>
  <svg class="abs ti" style="left:1125px;top:465px" width="18" height="18" viewBox="0 0 18 18"><g fill="none" stroke="#2a2a2e" stroke-width="1.80"><path d="M4 6.500V3.500A1.500 1.500 0 0 1 5.500 2H13.500A1.500 1.500 0 0 1 15 3.500V14A1.500 1.500 0 0 1 13.500 15.500H9.500"/><rect x="1.800" y="6.500" width="5.400" height="9" rx="1"/></g></svg>
  <svg class="abs ti" style="left:1150px;top:471px" width="20" height="6" viewBox="0 0 20 6"><g fill="#2a2a2e"><circle cx="3" cy="3.100" r="1.650"/><circle cx="9.700" cy="3.100" r="1.650"/><circle cx="16.400" cy="3.100" r="1.650"/></g></svg>
  <svg class="abs ti" style="left:1179px;top:467px" width="14" height="14" viewBox="0 0 14 14"><path d="M2 2.200L12.500 12.200M12.500 2.200L2 12.200" stroke="#2a2a2e" stroke-width="1.68"/></svg>
  <!-- toolbar labels -->
  <span class="t tl" id="d1" style="left:62px;color:#0060df">Inspector</span>
  <span class="t tl" id="d2" style="left:149.300px">Console</span>
  <span class="t tl" id="d3" style="left:230.600px">Debugger</span>
  <span class="t tl" id="d4" style="left:320.300px">Network</span>
  <span class="t tl" id="d5" style="left:403px">Style Editor</span>
  <span class="t tl" id="d6" style="left:500.600px">Performance</span>
  <span class="t tl" id="d7" style="left:606.600px">Memory</span>
  <span class="t tl" id="d8" style="left:689.300px">Storage</span>
  <span class="t tl" id="d9" style="left:767px">Accessibility</span>
  <span class="t tl" id="d10" style="left:870.300px">Application</span>
  <span class="t tl" id="d11" style="left:969.300px">DOM</span>

  <!-- row 2: search + sidebar tabs -->
  <div class="abs" style="left:0;top:513px;width:773px;height:1px;background:#e0e0e2"></div>
  <div class="abs" style="left:774px;top:489px;width:423px;height:24px;background:#f9f9fa"></div>
  <div class="abs" style="left:774px;top:513px;width:423px;height:1px;background:#e0e0e2"></div>
  <div class="abs" style="left:773px;top:489px;width:1px;height:218px;background:#e0e0e2"></div>
  <svg class="abs" style="left:6px;top:494px" width="14" height="14" viewBox="0 0 14 14"><g fill="none" stroke="#8a8a8c" stroke-width="1.700"><circle cx="5.700" cy="5.700" r="4"/><path d="M8.700 8.700L12.800 12.800"/></g></svg>
  <span class="t" id="d12" style="left:22.500px;top:495.500px;font-size:12px;color:#8a8a8c">Search HTML</span>
  <div class="abs" style="left:713px;top:494px;width:1px;height:15px;background:#dadadd"></div>
  <svg class="abs" style="left:722px;top:495px" width="14" height="14" viewBox="0 0 14 14"><path d="M7 1.500V12.800M1.400 7.200H12.600" stroke="#2a2a2e" stroke-width="1.400"/></svg>
  <svg class="abs" style="left:749px;top:494px" width="16" height="16" viewBox="0 0 16 16"><g stroke="#2a2a2e" fill="none"><path d="M9.300 5.200L2.800 11.700 2 14l2.300-.8 6.500-6.500" stroke-width="1.200"/><path d="M8.200 3.600l4.200 4.200" stroke-width="1.600"/><path d="M10 5.600l2.600-2.600a1.400 1.400 0 0 1 2 2L12 7.600" fill="#2a2a2e" stroke-width="1"/></g></svg>
  <svg class="abs" style="left:780px;top:495px" width="17" height="14" viewBox="0 0 17 14"><g fill="none" stroke="#2a2a2e" stroke-width="1.200"><rect x="1.600" y="1.600" width="13.800" height="10.800" rx="1"/><path d="M10 2v10M12.700 2v10"/></g><path d="M7.500 4.500v5L4.200 7Z" fill="#2a2a2e"/></svg>
  <div class="abs" style="left:802px;top:489px;width:50px;height:2px;background:#0a84ff"></div>
  <span class="t sl" id="e1" style="left:813.500px;color:#0060df">Rules</span>
  <span class="t sl" id="e2" style="left:863.400px">Layout</span>
  <span class="t sl" id="e3" style="left:921px">Computed</span>
  <span class="t sl" id="e4" style="left:1000.600px">Changes</span>
  <span class="t sl" id="e5" style="left:1068.200px">Compatibility</span>
  <span class="t sl" id="e6" style="left:1162.500px">Fonts</span>
  <div class="abs" style="left:1184px;top:489px;width:13px;height:24px;background:#f9f9fa;border-left:1px solid #dadadd"></div>
  <svg class="abs" style="left:1187px;top:498px" width="9" height="6" viewBox="0 0 9 6"><path d="M.3 .8H8.700L4.500 5Z" fill="#2a2a2e"/></svg>
  <!-- filter row -->
  <div class="abs" style="left:774px;top:538px;width:423px;height:1px;background:#e0e0e2"></div>
  <svg class="abs" style="left:782px;top:521px" width="12" height="11" viewBox="0 0 12 11"><path d="M1.500 1.300H10.500L7 5.500V9.700L5 8.500V5.500Z" fill="none" stroke="#8f8f9d" stroke-width="1.100" stroke-linejoin="round"/></svg>
  <span class="t" id="e7" style="left:797.700px;top:520.300px;font-size:12px;color:#8a8a8c">Filter Styles</span>
  <span class="t" id="e8" style="left:1031px;top:520.500px;font-size:12px;color:#2a2a2e">:hov</span>
  <span class="t" id="e9" style="left:1062px;top:520.500px;font-size:12px;color:#2a2a2e">.cls</span>
  <svg class="abs" style="left:1091px;top:520px" width="14" height="14" viewBox="0 0 14 14"><path d="M7 1.200V12.600M1.200 6.900H12.700" stroke="#2a2a2e" stroke-width="1.400"/></svg>
  <svg class="abs" style="left:1117px;top:518px" width="18" height="18" viewBox="0 0 18 18"><circle cx="9" cy="8.900" r="3.900" fill="#38383d"/><path d="M9 1.300v2.300M9 14.200v2.300M1.300 8.900h2.300M14.400 8.900h2.300M3.600 3.500l1.600 1.600M12.800 12.700l1.600 1.600M14.400 3.500l-1.600 1.600M5.200 12.700l-1.600 1.600" stroke="#38383d" stroke-width="1.700"/></svg>
  <svg class="abs" style="left:1146px;top:519px" width="16" height="16" viewBox="0 0 16 16"><defs><clipPath id="cc"><circle cx="8" cy="8" r="6.200"/></clipPath></defs><circle cx="10.600" cy="7.800" r="4.300" fill="#38383d" clip-path="url(#cc)"/><circle cx="8" cy="8" r="6.100" fill="none" stroke="#38383d" stroke-width="1.700"/></svg>
  <svg class="abs" style="left:1175px;top:519px" width="14" height="16" viewBox="0 0 14 16"><g fill="none" stroke="#38383d"><path d="M3.500 2H8.800L12 5.200V12.800A1.700 1.700 0 0 1 10.300 14.500H3.500A1.700 1.700 0 0 1 1.800 12.800V3.700A1.700 1.700 0 0 1 3.500 2Z" stroke-width="1.700" stroke-linejoin="round"/><path d="M4.500 7h2.500M4.500 9.400h5M4.500 11.800h5" stroke-width="1.100"/></g></svg>
</div>

</body></html>
